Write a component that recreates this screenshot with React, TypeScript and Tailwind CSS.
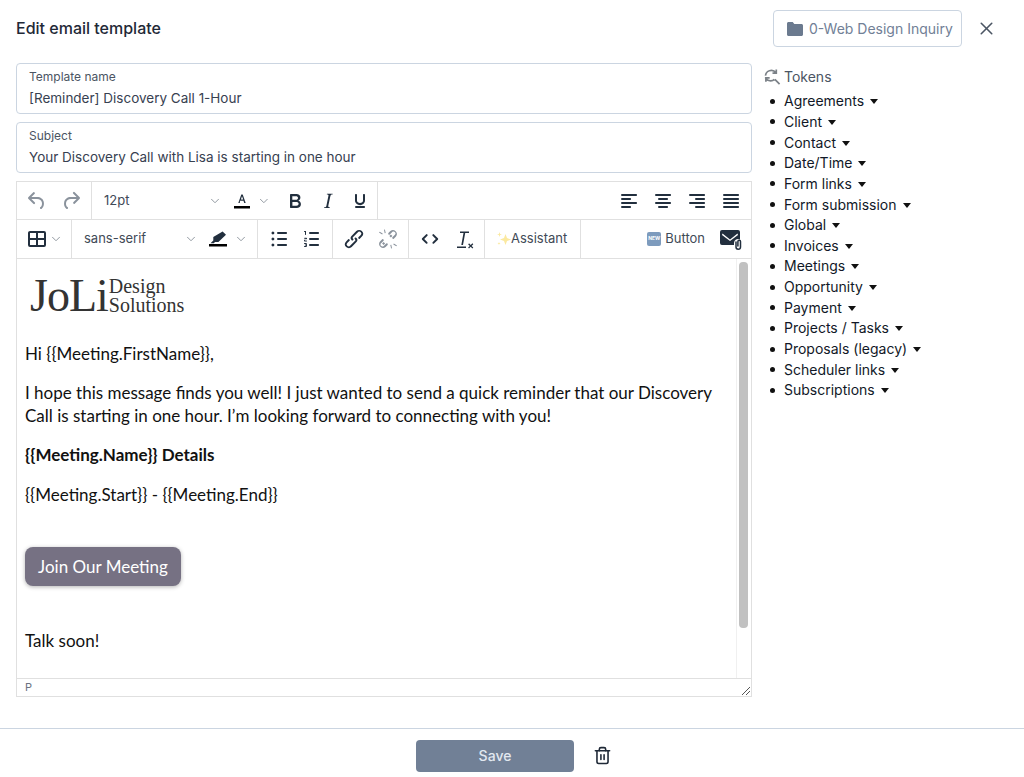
import { ChevronDown, X, Trash2 } from "lucide-react";
import type { ReactNode } from "react";

const TOKENS = [
  "Agreements",
  "Client",
  "Contact",
  "Date/Time",
  "Form links",
  "Form submission",
  "Global",
  "Invoices",
  "Meetings",
  "Opportunity",
  "Payment",
  "Projects / Tasks",
  "Proposals (legacy)",
  "Scheduler links",
  "Subscriptions",
];

function Ico({ d, muted }: { d: string; muted?: boolean }) {
  return (
    <svg viewBox="0 0 24 24" className="h-6 w-6" fill={muted ? "#8a929c" : "#222f3e"}>
      <path d={d} />
    </svg>
  );
}

function Btn({ children, w = "w-[34px]" }: { children: ReactNode; w?: string }) {
  return <div className={`flex h-[38px] items-center justify-center ${w}`}>{children}</div>;
}

function Chev() {
  return <ChevronDown className="h-[14px] w-[14px] text-[#8b929b]" strokeWidth={1.6} />;
}

function Group({ children, className = "" }: { children: ReactNode; className?: string }) {
  return <div className={`flex h-[38px] items-center border-r border-[#e0e0e0] ${className}`}>{children}</div>;
}

function Field({ label, value }: { label: string; value: string }) {
  return (
    <div className="h-[51px] rounded border border-[#cbd5e1] px-3 pt-[5px]">
      <div className="text-xs leading-4 text-[#4b5563]">{label}</div>
      <div className="mt-[3px] text-[13.5px] leading-5 text-[#374151]">{value}</div>
    </div>
  );
}

export default function App() {
  return (
    <div className="flex h-[777px] w-[1024px] flex-col bg-white font-['Inter',sans-serif] text-[#1f2937]">
      <header className="flex h-[63px] shrink-0 items-start justify-between pl-4 pr-[27px] pt-[10px]">
        <h1 className="mt-[8px] text-base leading-5 font-medium text-[#1f2937]">Edit email template</h1>
        <div className="flex items-center gap-[14px]">
          <button className="flex h-[37px] w-[189px] items-center gap-[6px] rounded border border-[#cbd5e1] pl-[13px] text-sm text-[#718096]">
            <svg viewBox="0 0 16 14" className="h-[14px] w-4" fill="#6b7a8f">
              <path d="M1.5 0h4.2l1.6 2h7.2c.8 0 1.5.7 1.5 1.5v9c0 .8-.7 1.5-1.5 1.5h-13C.7 14 0 13.300 0 12.500v-11C0 .7.700 0 1.500 0Z" />
            </svg>
            0-Web Design Inquiry
          </button>
          <X className="h-[21px] w-[21px] text-[#4b5563]" strokeWidth={1.8} />
        </div>
      </header>

      <div className="flex min-h-0 flex-1">
        <main className="ml-4 flex w-[736px] shrink-0 flex-col gap-2">
          <Field label="Template name" value="[Reminder] Discovery Call 1-Hour" />
          <Field label="Subject" value="Your Discovery Call with Lisa is starting in one hour" />

          <section className="flex h-[516px] flex-col border border-[#e0e0e0]">
            <div className="flex h-[38px] shrink-0 border-b border-[#e0e0e0]">
              <Group className="w-[75px] pl-[3px]">
                <Btn>
                  <Ico muted d="M6.400 8H12c3.700 0 6.200 2 6.800 5.100.6 2.700-.4 5.600-2.300 6.800a1 1 0 0 1-1-1.800c1.100-.6 1.800-2.700 1.400-4.600-.5-2.100-2.100-3.500-4.900-3.500H6.400l3.300 3.300a1 1 0 1 1-1.400 1.400l-5-5a1 1 0 0 1 0-1.400l5-5a1 1 0 0 1 1.400 1.400L6.400 8Z" />
                </Btn>
                <Btn>
                  <Ico muted d="M17.600 10H12c-2.800 0-4.400 1.400-4.900 3.500-.4 2 .3 4 1.400 4.600a1 1 0 1 1-1 1.800c-2-1.200-2.900-4.100-2.300-6.800.6-3 3-5.100 6.800-5.100h5.600l-3.300-3.300a1 1 0 1 1 1.400-1.400l5 5a1 1 0 0 1 0 1.400l-5 5a1 1 0 0 1-1.400-1.400l3.300-3.300Z" />
                </Btn>
              </Group>
              <Group className="w-[286px]">
                <div className="flex w-[133px] items-center justify-between pl-3 pr-0 text-[13px] text-[#3f4a57]">
                  12pt
                  <Chev />
                </div>
                <Btn w="w-[30px] ml-[5px]">
                  <svg viewBox="0 0 24 24" className="h-6 w-6">
                    <path fill="#222f3e" d="m8.300 14 3-8.500h1.400l3 8.500h-1.500l-.7-2.200h-3.500L9.800 14H8.300Zm2.600-3.400h2.300L12 7.200l-1.100 3.400Z" />
                    <rect x="4" y="17" width="16" height="2.500" fill="#000" />
                  </svg>
                </Btn>
                <Chev />
                <Btn w="w-[34px] ml-[8px]">
                  <Ico d="M7.800 19c-.3 0-.5 0-.6-.2l-.2-.5V5.700c0-.2 0-.4.2-.5l.6-.2h5c1.500 0 2.700.3 3.500 1 .7.600 1.100 1.400 1.100 2.500a3 3 0 0 1-.6 1.900c-.4.600-1 1-1.600 1.200.4.100.9.300 1.300.6s.8.700 1 1.200c.3.400.4 1 .4 1.600 0 1.300-.4 2.300-1.300 3-.8.700-2.100 1-3.800 1H7.800Zm5-8.300c.6 0 1.200-.1 1.600-.5.400-.3.600-.7.600-1.300 0-1.100-.8-1.700-2.300-1.700H9.300v3.500h3.400Zm.5 6c.7 0 1.300-.1 1.700-.4.400-.4.600-.9.600-1.500s-.2-1-.7-1.400c-.4-.3-1-.4-2-.4H9.400v3.800h4Z" />
                </Btn>
                <Btn w="w-[33px]">
                  <Ico d="m16.700 4.700-.1.900h-.3c-.6 0-1 0-1.400.3-.3.300-.4.600-.5 1.100l-2.100 9.800v.6c0 .5.400.8 1.400.8h.2l-.2.800H8l.2-.8h.2c1.100 0 1.800-.5 2-1.500l2-9.800.1-.5c0-.6-.4-.8-1.400-.8h-.3l.2-.9h5.800Z" />
                </Btn>
                <Btn>
                  <Ico d="M16 5c.6 0 1 .4 1 1v5.500a4 4 0 0 1-.4 1.800l-1 1.400a5.300 5.300 0 0 1-5.500 1 5 5 0 0 1-1.600-1c-.5-.4-.8-.9-1.100-1.400a4 4 0 0 1-.4-1.800V6c0-.6.400-1 1-1s1 .4 1 1v5.500c0 .3 0 .6.2 1l.6.700a3.300 3.300 0 0 0 2.200.8 3.400 3.400 0 0 0 2.200-.8c.3-.2.400-.5.600-.8l.2-.9V6c0-.6.400-1 1-1ZM8 17h8c.6 0 1 .4 1 1s-.4 1-1 1H8a1 1 0 0 1 0-2Z" />
                </Btn>
              </Group>
              <div className="flex flex-1 items-center justify-end pr-[3px]">
                <Btn>
                  <Ico d="M5 5h14c.6 0 1 .4 1 1s-.4 1-1 1H5a1 1 0 1 1 0-2Zm0 4h8c.6 0 1 .4 1 1s-.4 1-1 1H5a1 1 0 1 1 0-2Zm0 8h8c.6 0 1 .4 1 1s-.4 1-1 1H5a1 1 0 0 1 0-2Zm0-4h14c.6 0 1 .4 1 1s-.4 1-1 1H5a1 1 0 0 1 0-2Z" />
                </Btn>
                <Btn>
                  <Ico d="M5 5h14c.6 0 1 .4 1 1s-.4 1-1 1H5a1 1 0 1 1 0-2Zm3 4h8c.6 0 1 .4 1 1s-.4 1-1 1H8a1 1 0 1 1 0-2Zm0 8h8c.6 0 1 .4 1 1s-.4 1-1 1H8a1 1 0 0 1 0-2Zm-3-4h14c.6 0 1 .4 1 1s-.4 1-1 1H5a1 1 0 0 1 0-2Z" />
                </Btn>
                <Btn>
                  <Ico d="M5 5h14c.6 0 1 .4 1 1s-.4 1-1 1H5a1 1 0 1 1 0-2Zm6 4h8c.6 0 1 .4 1 1s-.4 1-1 1h-8a1 1 0 0 1 0-2Zm0 8h8c.6 0 1 .4 1 1s-.4 1-1 1h-8a1 1 0 0 1 0-2Zm-6-4h14c.6 0 1 .4 1 1s-.4 1-1 1H5a1 1 0 0 1 0-2Z" />
                </Btn>
                <Btn>
                  <Ico d="M5 5h14c.6 0 1 .4 1 1s-.4 1-1 1H5a1 1 0 1 1 0-2Zm0 4h14c.6 0 1 .4 1 1s-.4 1-1 1H5a1 1 0 1 1 0-2Zm0 4h14c.6 0 1 .4 1 1s-.4 1-1 1H5a1 1 0 0 1 0-2Zm0 4h14c.6 0 1 .4 1 1s-.4 1-1 1H5a1 1 0 0 1 0-2Z" />
                </Btn>
              </div>
            </div>

            <div className="flex h-[39px] shrink-0 border-b border-[#e0e0e0]">
              <Group className="h-[38px] w-[55px] pl-[8px]">
                <Ico d="M19 4a2 2 0 0 1 2 2v12a2 2 0 0 1-2 2H5a2 2 0 0 1-2-2V6c0-1.100.9-2 2-2h14Zm-8 9H5v5h6v-5Zm8 0h-6v5h6v-5Zm0-7h-6v5h6V6Zm-8 0H5v5h6V6Z" />
                <Chev />
              </Group>
              <Group className="h-[38px] w-[186px]">
                <div className="flex w-[126px] items-center justify-between pl-3 text-[13px] text-[#3f4a57]">
                  sans-serif
                  <Chev />
                </div>
                <Btn w="w-[26px] ml-[7px]">
                  <svg viewBox="0 0 24 24" className="h-6 w-6">
                    <path fill="#222f3e" d="M16.600 4.400 20 7.700 12.400 15H9l-1.200 1.300H4.500l2.800-2.900v-3.300l9.300-5.700Z" />
                    <rect x="3" y="17" width="18" height="2.500" fill="#000" />
                  </svg>
                </Btn>
                <div className="ml-[3px]">
                  <Chev />
                </div>
              </Group>
              <Group className="h-[38px] w-[75px] pl-[4px]">
                <Btn w="w-[33px]">
                  <Ico d="M11 5h8c.6 0 1 .4 1 1s-.4 1-1 1h-8a1 1 0 0 1 0-2Zm0 6h8c.6 0 1 .4 1 1s-.4 1-1 1h-8a1 1 0 0 1 0-2Zm0 6h8c.6 0 1 .4 1 1s-.4 1-1 1h-8a1 1 0 0 1 0-2ZM4.500 6c0-.4.100-.8.400-1 .3-.3.600-.5 1-.5s.8.200 1 .5c.3.200.5.600.5 1s-.2.800-.5 1c-.2.300-.6.500-1 .5s-.7-.2-1-.5c-.3-.2-.4-.6-.4-1Zm0 6c0-.4.100-.8.400-1 .3-.3.600-.5 1-.5s.8.200 1 .5c.3.200.5.600.5 1s-.2.800-.5 1c-.2.300-.6.500-1 .5s-.7-.2-1-.5c-.3-.2-.4-.6-.4-1Zm0 6c0-.4.100-.8.400-1 .3-.3.600-.5 1-.5s.8.200 1 .5c.3.200.5.600.5 1s-.2.800-.5 1c-.2.300-.6.500-1 .5s-.7-.2-1-.5c-.3-.2-.4-.6-.4-1Z" />
                </Btn>
                <Btn w="w-[33px]">
                  <Ico d="M10 17h8c.6 0 1 .4 1 1s-.4 1-1 1h-8a1 1 0 0 1 0-2Zm0-6h8c.6 0 1 .4 1 1s-.4 1-1 1h-8a1 1 0 0 1 0-2Zm0-6h8c.6 0 1 .4 1 1s-.4 1-1 1h-8a1 1 0 1 1 0-2ZM6 4v3.500c0 .3-.2.500-.5.500a.5.500 0 0 1-.5-.5V5h-.5a.5.500 0 0 1 0-1H6Zm-1 8.750v-.5h1.300a.7.700 0 0 0 0-1.500H4.600a.5.500 0 0 0 0 1H5.500L4.300 13c-.2.200-.3.400-.3.700 0 .4.300.7.700.7h1.800a.5.500 0 0 0 0-1H5ZM7 17.300c0-.8-.6-1.300-1.400-1.300H4.500a.5.500 0 0 0 0 1h1.100c.2 0 .4.100.4.300s-.2.300-.4.300H5a.5.500 0 0 0 0 .8h.6c.2 0 .4.100.4.300s-.2.300-.4.300H4.500a.5.500 0 0 0 0 1h1.100C6.400 20 7 19.400 7 18.700c0-.4-.1-.7-.3-.9.200-.100.300-.3.300-.5Z" />
                </Btn>
              </Group>
              <Group className="h-[38px] w-[76px] pl-[4px]">
                <Btn>
                  <Ico d="M6.200 12.300a1 1 0 0 1 1.400 1.400l-2.100 2.100a2 2 0 1 0 2.800 2.800l4.800-4.800a1 1 0 0 0 0-1.400 1 1 0 1 1 1.400-1.300 2.900 2.900 0 0 1 0 4L9.700 20c-1.500 1.500-4.100 1.500-5.600 0a4 4 0 0 1 0-5.600l2.100-2.100Zm11.600-.6a1 1 0 0 1-1.400-1.400l2.100-2.100a2 2 0 1 0-2.800-2.800L10.900 10.200a1 1 0 0 0 0 1.400 1 1 0 1 1-1.400 1.300 2.900 2.900 0 0 1 0-4l4.800-4.900c1.500-1.500 4.100-1.500 5.600 0a4 4 0 0 1 0 5.600l-2.100 2.100Z" />
                </Btn>
                <Btn>
                  <Ico muted d="M6.200 12.300a1 1 0 0 1 1.400 1.400l-2 2a2 2 0 1 0 2.600 2.800l2-2a1 1 0 0 1 1.400 1.400L9.600 20a4 4 0 0 1-5.600-5.600l2.200-2.100Zm11.600-.6a1 1 0 0 1-1.400-1.400l2-2a2 2 0 1 0-2.600-2.800l-2 2a1 1 0 0 1-1.400-1.400L14.400 4a4 4 0 0 1 5.600 5.600l-2.200 2.100ZM7.600 14.900l-1.500 1.500 1.500 1.500 1.500-1.500-1.500-1.500Zm8.800-5.800-1.500 1.500-1.500-1.500 1.500-1.500 1.500 1.500ZM3 5.500l.7-.7 3 1.800-.5.8L3 5.500ZM8 2.800l.9-.2.800 3.400-1 .2L8 2.800Zm13 15.700-.7.700-3-1.800.5-.8 3.200 1.900ZM16 21.200l-.9.200-.8-3.400 1-.2.700 3.400Z" />
                </Btn>
              </Group>
              <Group className="h-[38px] w-[76px] pl-[4px]">
                <Btn>
                  <Ico d="M9.400 7.400a1 1 0 0 1 0 1.400L6.200 12l3.200 3.200a1 1 0 0 1-1.400 1.400l-3.900-3.900a1 1 0 0 1 0-1.400L8 7.400a1 1 0 0 1 1.400 0Zm5.200 0a1 1 0 0 1 1.400 0l3.900 3.900a1 1 0 0 1 0 1.400L16 16.600a1 1 0 0 1-1.400-1.400l3.200-3.200-3.200-3.200a1 1 0 0 1 0-1.400Z" />
                </Btn>
                <Btn>
                  <Ico d="M13.200 6 11 18H9.300l2.200-12H8V4.500h9V6h-3.800ZM5 19.500h9V21H5v-1.500Zm12-3.200 1.700 1.700 1.700-1.700.9.900-1.700 1.700 1.700 1.700-.9.900-1.700-1.700L17 21.500l-.9-.9 1.700-1.700-1.700-1.700.9-.8Z" />
                </Btn>
              </Group>
              <Group className="h-[38px] w-[96px] pl-[12px] text-[13px] text-[#3f4a57]">
                <svg viewBox="0 0 14 16" className="h-4 w-[14px]" fill="#fbe9a0">
                  <path d="M8.500 3 10 7l4 1.500-4 1.500-1.500 4L7 10 3 8.500 7 7ZM2.500 1l.6 1.900L5 3.500l-1.900.6L2.500 6l-.6-1.900L0 3.500l1.900-.6ZM2 11l.4 1.100 1.100.4-1.100.4L2 14l-.4-1.100-1.100-.4 1.100-.4Z" />
                </svg>
                Assistant
              </Group>
              <div className="flex flex-1 items-center justify-end pr-[8px]">
                <div className="flex h-[14px] w-[14px] items-center justify-center rounded-[2px] bg-[#7d9bbd] text-[5px] font-bold text-white">
                  NEW
                </div>
                <span className="ml-[4px] text-[13px] text-[#3f4a57]">Button</span>
                <svg viewBox="0 0 24 24" className="ml-[14px] h-[24px] w-[24px]" fill="#222f3e">
                  <path d="M3 3h16a2 2 0 0 1 2 2v7.500a4 4 0 0 0-6 3.500v2H3a2 2 0 0 1-2-2V5a2 2 0 0 1 2-2Zm8 9.500L3.500 6.500 3 8l8 6 8-6-.5-1.500-7.500 6Z" />
                  <path fill="none" stroke="#222f3e" strokeWidth="1.500" strokeLinecap="round" d="M17 15v5a2.200 2.200 0 0 0 4.500 0v-5.500a1.300 1.300 0 0 0-2.600 0V19" />
                </svg>
              </div>
            </div>

            <div className="flex min-h-0 flex-1">
              <div className="flex-1 overflow-hidden pl-2 pt-[15px] font-['Lato',sans-serif] text-[17px] leading-[23px] text-[#111]">
                <div className="flex h-[44px] items-center pl-[5px] font-['Liberation_Serif',serif] text-[#333]">
                  <span className="text-[46px] leading-none tracking-[-1px]">JoLi</span>
                  <span className="ml-[1px] text-[20px] leading-[19px]">
                    Design
                    <br />
                    Solutions
                  </span>
                </div>
                <p className="mt-[24px]">{"Hi {{Meeting.FirstName}},"}</p>
                <p className="mt-[16px] w-[690px]">
                  I hope this message finds you well! I just wanted to send a quick reminder that our Discovery Call is
                  starting in one hour. I’m looking forward to connecting with you!
                </p>
                <p className="mt-[16px] font-bold">{"{{Meeting.Name}} Details"}</p>
                <p className="mt-[17px]">{"{{Meeting.Start}} - {{Meeting.End}}"}</p>
                <div className="mt-[41px] flex h-[39px] w-[156px] items-center justify-center rounded-lg bg-[#767183] text-white shadow-[0_1px_4px_rgba(0,0,0,0.3)]">
                  Join Our Meeting
                </div>
                <p className="mt-[43px]">Talk soon!</p>
              </div>
              <div className="w-[15px] shrink-0 border-l border-[#f0f0f0] bg-white px-[2px] pt-[3px]">
                <div className="h-[366px] w-[9px] rounded bg-[#c1c1c1]" />
              </div>
            </div>

            <div className="flex h-[18px] shrink-0 items-center justify-between border-t border-[#e0e0e0] pl-2 text-[11px] text-[#6b7280]">
              P
              <svg viewBox="0 0 10 10" className="mt-[6px] h-[10px] w-[10px]" stroke="#555" strokeWidth="1" fill="none">
                <path d="M1 9 9 1M5 9l4-4" />
              </svg>
            </div>
          </section>
        </main>

        <aside className="ml-3 flex-1 pt-[5px] text-sm">
          <div className="flex h-[18px] items-center gap-[3px] text-[#4b5563]">
            <svg viewBox="0 0 18 18" className="h-[18px] w-[17px]" fill="none" stroke="#7b8187" strokeWidth="1.800">
              <path d="M1.500 7.500C2 4 5 2 8 2c2 0 3.500 1 4.500 2.500M13 1v4H9M1.500 9.500c1 2.500 3 3.500 5.500 3.500 1.500 0 3-.5 4-1.500M2 14v-4h4M11.500 11.500l5 5" />
            </svg>
            Tokens
          </div>
          <ul className="mt-[5px] pl-[20px] text-[#111827]">
            {TOKENS.map((t) => (
              <li key={t} className="relative flex h-[20.65px] items-center gap-[6px] leading-5">
                <span className="absolute left-[-14px] h-[5px] w-[5px] rounded-full bg-[#111]" />
                {t}
                <span className="mt-[1px] h-0 w-0 border-x-[4px] border-t-[5px] border-x-transparent border-t-[#111]" />
              </li>
            ))}
          </ul>
        </aside>
      </div>

      <footer className="flex h-[49px] shrink-0 items-start justify-center gap-[19px] border-t border-[#cbd5e1] pl-[4px] pt-[11px]">
        <button className="h-[32px] w-[158px] rounded bg-[#718096] text-sm font-medium text-[#e2e8f0]">Save</button>
        <Trash2 className="mt-[6px] h-[19px] w-[19px] text-[#1f2937]" strokeWidth={2} />
      </footer>
    </div>
  );
}
